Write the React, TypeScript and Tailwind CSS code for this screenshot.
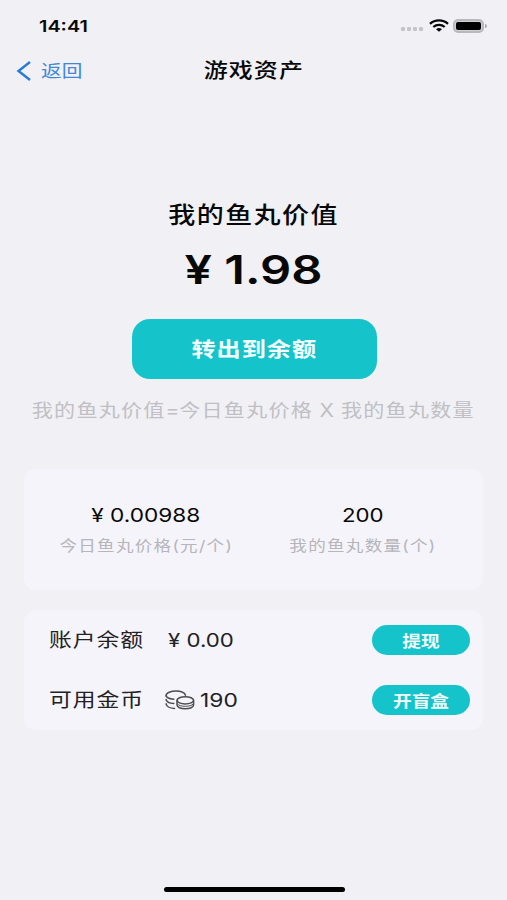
import type { ReactNode } from 'react';

const sans = "font-['Inter','Noto_Sans_CJK_SC',sans-serif]";

function Label({ className, children }: { className: string; children: ReactNode }) {
  return <span className={`inline-block whitespace-nowrap ${className}`}>{children}</span>;
}

function StatusBar() {
  return (
    <div className="flex h-[50px] items-center pl-[39px] pr-[20px] pt-[1px]">
      <Label className="origin-left scale-x-[1.24] text-[16px] font-semibold">14:41</Label>
      <div className="ml-auto flex items-center">
        <div className="mr-[6px] mt-[7px] flex gap-[2px]">
          <i className="size-[4px] rounded-[1px] bg-[#c5c4c9]" />
          <i className="size-[4px] rounded-[1px] bg-[#c5c4c9]" />
          <i className="size-[4px] rounded-[1px] bg-[#c5c4c9]" />
          <i className="size-[4px] rounded-[1px] bg-[#c5c4c9]" />
        </div>
        <svg width="20" height="13" viewBox="0 0 20 13" fill="none" stroke="#080808" strokeWidth="2.3">
          <path d="M1 4.8C6 .3 14 .3 19 4.8" />
          <path d="M4.3 8C7.5 5.2 12.5 5.2 15.7 8" />
          <path d="M7 10.2c1.8-1.6 4.2-1.6 6 0L10 12.8z" fill="#080808" stroke="none" />
        </svg>
        <div className="ml-[4px] h-[14px] w-[31px] rounded-[5px] border-2 border-[#b9b8bd] bg-[#d0cfd4] p-px">
          <div className="h-full w-full rounded-[2px] bg-black" />
        </div>
        <div className="ml-px h-[4px] w-[2px] rounded-r-full bg-[#aaa9ae]" />
      </div>
    </div>
  );
}

function Coins() {
  return (
    <svg width="30" height="20" viewBox="0 0 30 20" fill="none" stroke="#4d4d50" strokeWidth="1.5" strokeLinecap="round">
      <path d="M20.5 5.1C19.5 2.6 16 1 11 1S1.2 2.9 1.2 5.2 4.5 8.8 8.8 9.2" />
      <path d="M1.2 5.5v1M1.2 9.6c.4 2.2 3.4 3.7 7.6 3.9M1.2 14c.4 2.4 3.5 4.2 8.3 4.5M1.2 9.6v.6M1.2 13.8v.6" />
      <ellipse cx="20.3" cy="10.3" rx="8.3" ry="3.6" />
      <path d="M12 10.5v4.6c0 2.1 3.7 3.7 8.3 3.7s8.3-1.6 8.3-3.7v-4.6" />
      <path d="M12.5 14.2c1.3 1.3 4.2 2.1 7.8 2.1s6.5-.8 7.8-2.1" strokeWidth="1" />
    </svg>
  );
}

function Pill({ children }: { children: ReactNode }) {
  return (
    <button className="ml-auto flex h-[30px] w-[98px] items-center justify-center rounded-full bg-[#15c4cb] pt-px text-[#f3ffff]">
      <Label className="scale-x-[1.17] text-[16px] font-bold">{children}</Label>
    </button>
  );
}

export default function App() {
  return (
    <main className={`${sans} flex h-[900px] w-[507px] flex-col overflow-hidden bg-[#f1f0f5] text-[#080808]`}>
      <StatusBar />
      <nav className="grid h-[42px] grid-cols-3 items-center">
        <div className="flex items-center pl-[16px] text-[#4388d5]">
          <svg width="16" height="20" viewBox="0 0 16 20" fill="none" stroke="#287bd5" strokeWidth="2.4">
            <path d="M14 1 2.5 10 14 19" />
          </svg>
          <Label className="ml-[9px] origin-left scale-x-[1.18] text-[17.5px]">返回</Label>
        </div>
        <h1 className="text-center text-[20px] leading-none">
          <Label className="scale-x-[1.2] font-medium tracking-[0.9px]">游戏资产</Label>
        </h1>
      </nav>

      <section className="flex flex-col items-center pt-[102px]">
        <h2 className="flex h-[40px] items-center pl-px pt-[2px] text-[23px]">
          <Label className="scale-x-[1.175] font-medium tracking-[1.2px]">我的鱼丸价值</Label>
        </h2>
        <div className="flex h-[70px] items-center pt-px">
          <Label className="scale-x-[1.22] text-[40px] font-semibold">¥ 1.98</Label>
        </div>
        <button className="ml-px mt-[15px] flex h-[60px] w-[245px] items-center justify-center rounded-[18px] bg-[#15c4cb] pt-[2px] text-[#f3ffff]">
          <Label className="scale-x-[1.18] text-[20.5px] font-bold tracking-[0.8px]">转出到余额</Label>
        </button>
        <div className="flex h-[60px] items-center pt-[2px] text-[#c0bfc4]">
          <Label className="scale-x-[1.17] text-[18px] tracking-[1.05px]">
            我的鱼丸价值<span className="tracking-[-0.2px]">=</span>今日鱼丸价格<span className="tracking-[0.5px]"> X </span>我的鱼丸数量
          </Label>
        </div>
      </section>

      <section className="mx-[24px] mt-[30px] grid h-[121px] grid-cols-2 rounded-[12px] bg-[#f5f4fa] pt-[31px]">
        <div className="flex flex-col items-center pl-[15px]">
          <Label className="scale-x-[1.19] text-[19px] leading-[31px]">¥ 0.00988</Label>
          <Label className="scale-x-[1.17] text-[15px] leading-[30px] tracking-[1.1px] text-[#b6b5ba]">今日鱼丸价格(元/个)</Label>
        </div>
        <div className="flex flex-col items-center pr-[11px]">
          <Label className="scale-x-[1.17] text-[19px] leading-[31px]">200</Label>
          <Label className="scale-x-[1.17] text-[15px] leading-[30px] tracking-[1.1px] text-[#b6b5ba]">我的鱼丸数量(个)</Label>
        </div>
      </section>

      <section className="mx-[24px] mt-[20px] rounded-[12px] bg-[#f5f4fa] text-[19px] text-[#222224]">
        <div className="flex h-[60px] items-center pl-[25px] pr-[13px]">
          <div className="w-[119px] pt-[3px]"><Label className="origin-left scale-x-[1.2] tracking-[0.8px]">账户余额</Label></div>
          <Label className="origin-left scale-x-[1.17] pt-[2px]">¥ 0.00</Label>
          <Pill>提现</Pill>
        </div>
        <div className="flex h-[60px] items-center pl-[25px] pr-[13px]">
          <div className="w-[116px] pt-[3px]"><Label className="origin-left scale-x-[1.2] tracking-[0.8px]">可用金币</Label></div>
          <Coins />
          <Label className="ml-[5px] origin-left scale-x-[1.2] pt-[2px]">190</Label>
          <Pill>开盲盒</Pill>
        </div>
      </section>

      <div className="mx-auto mb-[8px] mt-auto h-[5px] w-[181px] translate-x-px rounded-full bg-black" />
    </main>
  );
}
